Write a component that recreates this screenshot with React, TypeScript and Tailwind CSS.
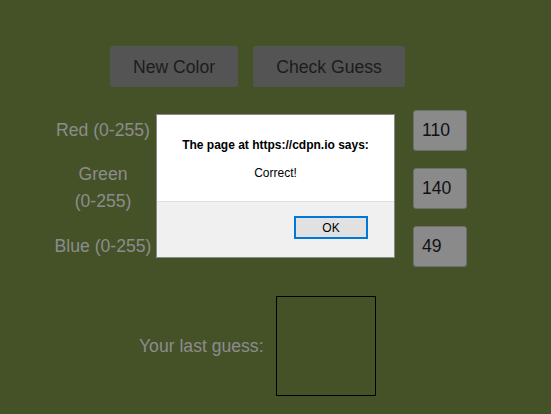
export default function App() {
  const rows = [
    { label: ["Red (0-255)"], value: "110" },
    { label: ["Green", "(0-255)"], value: "140" },
    { label: ["Blue (0-255)"], value: "49" },
  ];
  return (
    <div
      className="relative w-[551px] h-[414px] overflow-hidden bg-[#455228]"
      style={{ fontFamily: '"Liberation Sans", Arial, sans-serif' }}
    >
      <div className="flex gap-[15px] pt-[46px] pl-[110px]">
        <div className="w-[128px] h-[41px] rounded-[3px] bg-[#545454] text-[#1c1c1c] text-[17.6px] flex items-center justify-center pt-[2px]">
          New Color
        </div>
        <div className="w-[152px] h-[41px] rounded-[3px] bg-[#545454] text-[#1c1c1c] text-[17.6px] flex items-center justify-center pt-[2px]">
          Check Guess
        </div>
      </div>

      <div className="mt-[14px] flex flex-col">
        {rows.map((r) => (
          <div key={r.value} className="h-[58px] flex items-center">
            <div className="ml-[50px] w-[106px] text-center text-[#8c8c8c] text-[17.6px] leading-[27px]">
              {r.label.map((l) => (
                <div key={l}>{l}</div>
              ))}
            </div>
            <div className="w-[257px]" />
            <div className="w-[54px] h-[41px] rounded-[3px] bg-[#8a8a8a] border border-[#6e6e6e] text-[#111] text-[17.6px] flex items-center pl-[8px]">
              {r.value}
            </div>
          </div>
        ))}
      </div>

      <div className="mt-[21px] flex items-center pl-[139px] gap-[12px]">
        <span className="text-[#8c8c8c] text-[17.6px]">Your last guess:</span>
        <div className="w-[100px] h-[100px] border border-black" />
      </div>

      <div className="absolute left-[156px] top-[114px] w-[239px] h-[144px] border border-[#8a8a8a] bg-white flex flex-col">
        <div className="h-[86px] flex flex-col items-center pt-[23px]">
          <div className="text-[12px] font-bold text-black leading-[14px]">
            The page at https://cdpn.io says:
          </div>
          <div className="mt-[14px] text-[12px] text-black leading-[14px]">Correct!</div>
        </div>
        <div className="flex-1 bg-[#f0f0f0] border-t border-[#dfdfdf] flex justify-end items-start pt-[14px] pr-[26px]">
          <div className="w-[74px] h-[23px] border-2 border-[#0078d7] bg-[#e1e1e1] text-[12px] text-black flex items-center justify-center">
            OK
          </div>
        </div>
      </div>
    </div>
  );
}
